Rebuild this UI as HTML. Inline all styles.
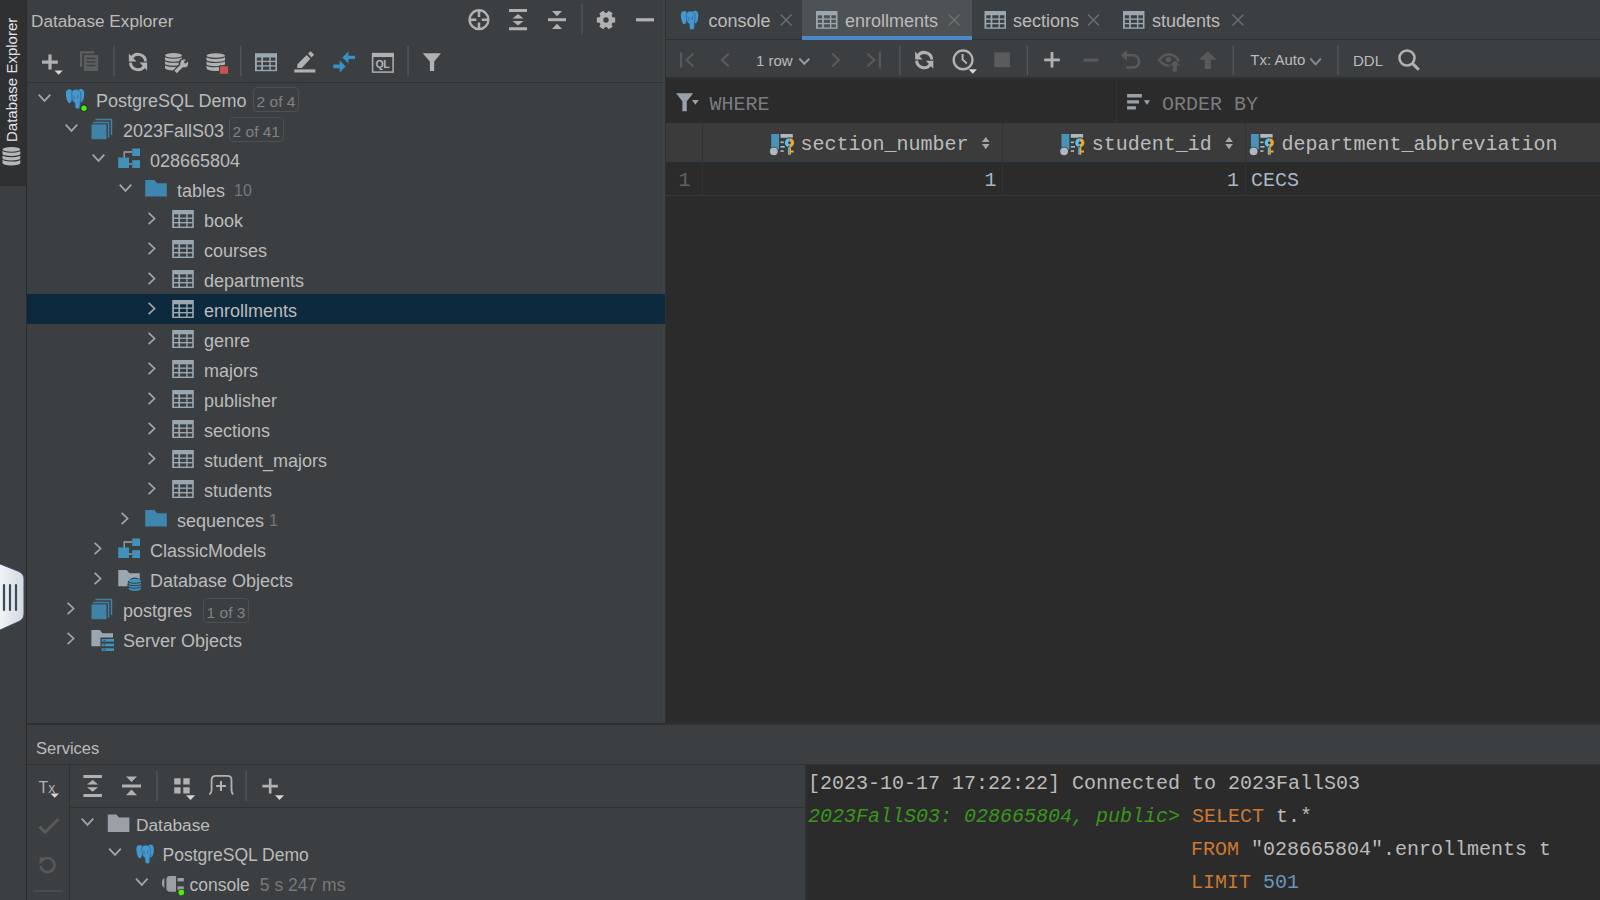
<!DOCTYPE html>
<html><head><meta charset="utf-8">
<style>
*{box-sizing:border-box;margin:0;padding:0}
html,body{width:1600px;height:900px;overflow:hidden;background:#3c3f41;font-family:"Liberation Sans",sans-serif;color:#bbbbbb}
.a{position:absolute}
.t{position:absolute;white-space:pre;font-size:18px;line-height:20px}
.m{position:absolute;white-space:pre;font-family:"Liberation Mono",monospace;font-size:20px;line-height:24px}
svg.ov{position:absolute;left:0;top:0;overflow:visible}
</style></head><body>
<div class="a" style="left:0px;top:0px;width:26px;height:900px;background:#3c3f41;"></div>
<div class="a" style="left:0px;top:0px;width:26px;height:186px;background:#2e3032;"></div>
<div class="a" style="left:26px;top:0px;width:1px;height:900px;background:#2b2b2b;"></div>
<div class="a" style="left:27px;top:0px;width:638px;height:723px;background:#3c3f41;"></div>
<div class="a" style="left:27px;top:82px;width:638px;height:1px;background:#2f3133;"></div>
<div class="a" style="left:663px;top:0px;width:2px;height:723px;background:#404345;"></div>
<div class="a" style="left:665px;top:0px;width:1px;height:723px;background:#2e3032;"></div>
<div class="a" style="left:666px;top:0px;width:934px;height:39px;background:#3c3f41;"></div>
<div class="a" style="left:666px;top:39px;width:934px;height:1px;background:#2f3133;"></div>
<div class="a" style="left:802px;top:0px;width:170px;height:36px;background:#4e5254;"></div>
<div class="a" style="left:802px;top:36px;width:170px;height:4px;background:#4a88c7;"></div>
<div class="a" style="left:666px;top:40px;width:934px;height:38px;background:#3c3f41;"></div>
<div class="a" style="left:666px;top:77px;width:934px;height:2px;background:#2f3133;"></div>
<div class="a" style="left:666px;top:79px;width:934px;height:644px;background:#2b2b2b;"></div>
<div class="a" style="left:1116px;top:79px;width:1px;height:44px;background:#333333;"></div>
<div class="a" style="left:666px;top:123px;width:934px;height:38px;background:#3b3b3b;"></div>
<div class="a" style="left:666px;top:160px;width:934px;height:2px;background:#353c41;"></div>
<div class="a" style="left:702px;top:123px;width:1px;height:72px;background:#323232;"></div>
<div class="a" style="left:1002px;top:123px;width:1px;height:72px;background:#323232;"></div>
<div class="a" style="left:1245px;top:123px;width:1px;height:72px;background:#323232;"></div>
<div class="a" style="left:666px;top:195px;width:934px;height:1px;background:#3a3a3a;"></div>
<div class="a" style="left:27px;top:723px;width:1573px;height:2px;background:#2e3032;"></div>
<div class="a" style="left:27px;top:725px;width:1573px;height:175px;background:#3c3f41;"></div>
<div class="a" style="left:27px;top:764px;width:1573px;height:1px;background:#2f3133;"></div>
<div class="a" style="left:69px;top:765px;width:1px;height:135px;background:#2f3133;"></div>
<div class="a" style="left:70px;top:807px;width:735px;height:1px;background:#2f3133;"></div>
<div class="a" style="left:805px;top:765px;width:2px;height:135px;background:#2e3032;"></div>
<div class="a" style="left:807px;top:765px;width:793px;height:135px;background:#2b2b2b;"></div>
<div class="t" style="left:31px;top:10.8px;font-size:17.2px;color:#bbbbbb;">Database Explorer</div>
<div class="t" style="left:375.6px;top:57.2px;font-size:10.5px;line-height:14px;font-weight:bold;color:#b4b6b8;letter-spacing:-0.4px">QL</div>
<div class="t" style="left:96px;top:91.3px;font-size:18px;color:#bbbbbb;">PostgreSQL Demo</div>
<div class="t" style="left:123px;top:121.3px;font-size:18px;color:#bbbbbb;">2023FallS03</div>
<div class="t" style="left:150px;top:151.3px;font-size:18px;color:#bbbbbb;">028665804</div>
<div class="t" style="left:177px;top:181.3px;font-size:18px;color:#bbbbbb;">tables</div>
<div class="t" style="left:204px;top:211.3px;font-size:18px;color:#bbbbbb;">book</div>
<div class="t" style="left:204px;top:241.3px;font-size:18px;color:#bbbbbb;">courses</div>
<div class="t" style="left:204px;top:271.3px;font-size:18px;color:#bbbbbb;">departments</div>
<div class="a" style="left:27px;top:294px;width:638px;height:30px;background:#0d293e;"></div>
<div class="t" style="left:204px;top:301.3px;font-size:18px;color:#bbbbbb;">enrollments</div>
<div class="t" style="left:204px;top:331.3px;font-size:18px;color:#bbbbbb;">genre</div>
<div class="t" style="left:204px;top:361.3px;font-size:18px;color:#bbbbbb;">majors</div>
<div class="t" style="left:204px;top:391.3px;font-size:18px;color:#bbbbbb;">publisher</div>
<div class="t" style="left:204px;top:421.3px;font-size:18px;color:#bbbbbb;">sections</div>
<div class="t" style="left:204px;top:451.3px;font-size:18px;color:#bbbbbb;">student_majors</div>
<div class="t" style="left:204px;top:481.3px;font-size:18px;color:#bbbbbb;">students</div>
<div class="t" style="left:177px;top:511.3px;font-size:18px;color:#bbbbbb;">sequences</div>
<div class="t" style="left:150px;top:541.3px;font-size:18px;color:#bbbbbb;">ClassicModels</div>
<div class="t" style="left:150px;top:571.3px;font-size:18px;color:#bbbbbb;">Database Objects</div>
<div class="t" style="left:123px;top:601.3px;font-size:18px;color:#bbbbbb;">postgres</div>
<div class="t" style="left:123px;top:631.3px;font-size:18px;color:#bbbbbb;">Server Objects</div>
<div class="a" style="left:253px;top:87px;width:46px;height:25px;border:1.3px solid #4d5052;border-radius:4px"></div>
<div class="t" style="left:256.6px;top:92px;font-size:15.5px;color:#808284;">2 of 4</div>
<div class="a" style="left:229px;top:117px;width:55px;height:25px;border:1.3px solid #4d5052;border-radius:4px"></div>
<div class="t" style="left:232.6px;top:122px;font-size:15.5px;color:#808284;">2 of 41</div>
<div class="a" style="left:203px;top:598px;width:46px;height:25px;border:1.3px solid #4d5052;border-radius:4px"></div>
<div class="t" style="left:206.6px;top:603px;font-size:15.5px;color:#808284;">1 of 3</div>
<div class="t" style="left:234px;top:181px;font-size:16px;color:#75777a;">10</div>
<div class="t" style="left:269px;top:511px;font-size:16px;color:#75777a;">1</div>
<div class="t" style="left:-47.8px;top:70.5px;width:120px;height:22px;font-size:15px;line-height:22px;color:#e4e4e4;transform:rotate(-90deg);text-align:center">Database Explorer</div>
<div class="t" style="left:708.5px;top:10.8px;font-size:18px;color:#bbbbbb;">console</div>
<div class="t" style="left:845px;top:10.8px;font-size:18px;color:#bbbbbb;">enrollments</div>
<div class="t" style="left:1013px;top:10.8px;font-size:18px;color:#bbbbbb;">sections</div>
<div class="t" style="left:1152px;top:10.8px;font-size:18px;color:#bbbbbb;">students</div>
<div class="t" style="left:756px;top:50.5px;font-size:15px;color:#bbbbbb;">1 row</div>
<div class="t" style="left:1250.3px;top:50.3px;font-size:15px;color:#bbbbbb;">Tx: Auto</div>
<div class="t" style="left:1353px;top:50.7px;font-size:15px;color:#bbbbbb;">DDL</div>
<div class="m" style="left:709.4px;top:92.8px;font-size:20px;color:#7a7c7e;">WHERE</div>
<div class="m" style="left:1162px;top:92.8px;font-size:20px;color:#7a7c7e;">ORDER BY</div>
<div class="m" style="left:800.5px;top:132.8px;font-size:20px;color:#bbbbbb;">section_number</div>
<div class="m" style="left:1091.8px;top:132.8px;font-size:20px;color:#bbbbbb;">student_id</div>
<div class="m" style="left:1281.5px;top:132.8px;font-size:20px;color:#bbbbbb;">department_abbreviation</div>
<div class="m" style="left:678.5px;top:168.8px;font-size:20px;color:#606366;">1</div>
<div class="m" style="left:984.5px;top:168.8px;font-size:20px;color:#a9b7c6;">1</div>
<div class="m" style="left:1227px;top:168.8px;font-size:20px;color:#a9b7c6;">1</div>
<div class="m" style="left:1251px;top:168.8px;font-size:20px;color:#a9b7c6;">CECS</div>
<div class="t" style="left:36px;top:737.5px;font-size:16.5px;color:#bbbbbb;">Services</div>
<div class="t" style="left:38.5px;top:778.3px;font-size:16px;color:#afb1b3;">T<span style="font-size:14px">x</span></div>
<div class="t" style="left:136px;top:814.8px;font-size:17.3px;color:#bbbbbb;">Database</div>
<div class="t" style="left:162.5px;top:844.8px;font-size:17.5px;color:#bbbbbb;">PostgreSQL Demo</div>
<div class="t" style="left:189.5px;top:874.8px;font-size:17.5px;color:#bbbbbb;">console</div>
<div class="t" style="left:259.8px;top:874.8px;font-size:17.5px;color:#787a7c;">5 s 247 ms</div>
<div class="m" style="left:808px;top:766.8px;font-size:20px;color:#bbbbbb;;line-height:33px">[2023-10-17 17:22:22] Connected to 2023FallS03</div>
<div class="m" style="left:808px;top:799.8px;font-size:20px;color:#3a961c;;line-height:33px"><i>2023FallS03: 028665804, public&gt;</i> <span style="color:#cc7832">SELECT</span><span style="color:#bbbbbb"> t.*</span></div>
<div class="m" style="left:1191px;top:832.8px;font-size:20px;color:#bbbbbb;;line-height:33px"><span style="color:#cc7832">FROM</span> "028665804".enrollments t</div>
<div class="m" style="left:1191px;top:865.8px;font-size:20px;color:#bbbbbb;;line-height:33px"><span style="color:#cc7832">LIMIT</span> <span style="color:#6897bb">501</span></div>
<svg class="ov" width="1600" height="900" viewBox="0 0 1600 900">
<circle cx="479" cy="19.7" r="9.4" fill="none" stroke="#afb1b3" stroke-width="2.4"/>
<path d="M479 11v6M479 22.4v6M470.3 19.7h6M481.7 19.7h6" stroke="#afb1b3" stroke-width="2.5"/>
<path d="M509 9h18v3h-18zM509 27.3h18v3h-18z" fill="#afb1b3"/>
<path d="M512.5 18.5L518 14L523.5 18.5zM512.5 21L518 25.5L523.5 21z" fill="#afb1b3"/>
<path d="M548 18.2h18v3h-18z" fill="#afb1b3"/>
<path d="M552 11h10L557 16.2zM552 29h10L557 23.8z" fill="#afb1b3"/>
<rect x="581.3" y="4" width="1.3" height="30" fill="#55585a"/>
<path d="M612.43 17.24 L615.18 17.56 L615.18 22.44 L612.43 22.76 L611.61 24.19 L612.70 26.73 L608.48 29.17 L606.82 26.95 L605.18 26.95 L603.52 29.17 L599.30 26.73 L600.39 24.19 L599.57 22.76 L596.82 22.44 L596.82 17.56 L599.57 17.24 L600.39 15.81 L599.30 13.27 L603.52 10.83 L605.18 13.05 L606.82 13.05 L608.48 10.83 L612.70 13.27 L611.61 15.81Z M608.7 20 A2.7 2.7 0 1 0 603.3 20 A2.7 2.7 0 1 0 608.7 20Z" fill="#afb1b3" fill-rule="evenodd"/>
<rect x="636" y="18.2" width="18" height="3.2" fill="#afb1b3"/>
<path d="M48.4 54.5h3.2v15.1h-3.2zM42 60.4h15.8v3.3h-15.8z" fill="#afb1b3"/>
<path d="M54.5 70.6h8.3l-4.15 4.2z" fill="#d6d6d6"/>
<path d="M80 51.2h14.3v2.2h-12.1v13.5h-2.2z" fill="#5c5f61"/>
<rect x="84" y="55.1" width="14.2" height="15.8" fill="#5c5f61"/>
<path d="M86.5 58.5h9M86.5 62h9M86.5 65.5h9" stroke="#3c3f41" stroke-width="1.3"/>
<rect x="113.4" y="46" width="1.3" height="30" fill="#55585a"/>
<path d="M145.60 61.40 A7.6 7.6 0 0 0 131.77 57.64" fill="none" stroke="#afb1b3" stroke-width="3"/>
<path d="M128.90 53.40 V61.40 H136.40Z" fill="#afb1b3"/>
<path d="M130.40 62.60 A7.6 7.6 0 0 0 144.23 66.36" fill="none" stroke="#afb1b3" stroke-width="3"/>
<path d="M147.10 70.60 V62.60 H139.60Z" fill="#afb1b3"/>
<path d="M165 55.6 A8.5 2.6 0 0 1 182 55.6 V67.9 A8.5 2.6 0 0 1 165 67.9Z" fill="#afb1b3"/>
<path d="M164.5 55.6 A9.0 2.6 0 0 0 182.5 55.6" fill="none" stroke="#3c3f41" stroke-width="1.1"/>
<path d="M164.5 59.7 A9.0 2.6 0 0 0 182.5 59.7" fill="none" stroke="#3c3f41" stroke-width="1.1"/>
<path d="M164.5 63.800000000000004 A9.0 2.6 0 0 0 182.5 63.800000000000004" fill="none" stroke="#3c3f41" stroke-width="1.1"/>
<path d="M175 72.6 L183.6 64" stroke="#3c3f41" stroke-width="6" />
<circle cx="184.2" cy="63.4" r="5.6" fill="#3c3f41"/>
<path d="M175.6 72 L182.8 64.8" stroke="#afb1b3" stroke-width="3.4" stroke-linecap="butt"/>
<circle cx="184.2" cy="63.4" r="3.9" fill="#afb1b3"/>
<path d="M184.6 62.9 L188.6 58.9" stroke="#3c3f41" stroke-width="2.6"/>
<path d="M206.5 55.800000000000004 A9.25 2.6 0 0 1 225.0 55.800000000000004 V68.30000000000001 A9.25 2.6 0 0 1 206.5 68.30000000000001Z" fill="#afb1b3"/>
<path d="M206.0 55.800000000000004 A9.75 2.6 0 0 0 225.5 55.800000000000004" fill="none" stroke="#3c3f41" stroke-width="1.1"/>
<path d="M206.0 59.966666666666676 A9.75 2.6 0 0 0 225.5 59.966666666666676" fill="none" stroke="#3c3f41" stroke-width="1.1"/>
<path d="M206.0 64.13333333333334 A9.75 2.6 0 0 0 225.5 64.13333333333334" fill="none" stroke="#3c3f41" stroke-width="1.1"/>
<rect x="219" y="65.3" width="9.9" height="9.5" fill="#3c3f41"/>
<rect x="220" y="66.3" width="8" height="7.5" fill="#c75450"/>
<rect x="240.1" y="46" width="1.3" height="30" fill="#55585a"/>
<rect x="255" y="53.2" width="22" height="18" fill="#9aa7b0"/>
<rect x="256.85" y="57.50" width="4.42" height="3.20" fill="#3c3f41"/>
<rect x="256.85" y="62.10" width="4.42" height="3.10" fill="#3c3f41"/>
<rect x="256.85" y="66.60" width="4.42" height="3.20" fill="#3c3f41"/>
<rect x="263.02" y="57.50" width="6.27" height="3.20" fill="#3c3f41"/>
<rect x="263.02" y="62.10" width="6.27" height="3.10" fill="#3c3f41"/>
<rect x="263.02" y="66.60" width="6.27" height="3.20" fill="#3c3f41"/>
<rect x="270.73" y="57.50" width="4.63" height="3.20" fill="#3c3f41"/>
<rect x="270.73" y="62.10" width="4.63" height="3.10" fill="#3c3f41"/>
<rect x="270.73" y="66.60" width="4.63" height="3.20" fill="#3c3f41"/>
<path d="M297.3 67.9 L297.3 64.4 L306.6 55.1 L310.3 58.7 L301.8 67.9Z" fill="#afb1b3"/>
<path d="M308.1 53.6 L310.6 51.3 L314.1 54.8 L311.4 57.6Z" fill="#afb1b3"/>
<rect x="294.3" y="69.4" width="21.1" height="3.1" fill="#afb1b3"/>
<path d="M342.4 57.4 L348.4 51.4 L348.4 55.8 L355 55.8 L355 59 L348.4 59 L348.4 63.4Z" fill="#3592c4"/>
<path d="M345.6 66.4 L339.7 60.4 L339.7 64.6 L333.2 64.6 L333.2 68.2 L339.7 68.2 L339.7 72.4Z" fill="#3592c4"/>
<rect x="372.6" y="53.6" width="20.5" height="18.5" fill="none" stroke="#afb1b3" stroke-width="1.5"/>
<rect x="372" y="53" width="21.8" height="4" fill="#afb1b3"/>
<rect x="407.4" y="46" width="1.3" height="30" fill="#55585a"/>
<path d="M422.7 53.2 H441 L434.2 61.5 V70.9 H429.9 V61.5Z" fill="#afb1b3"/>
<path d="M38.7 94.7 L44.5 100.9 L50.3 94.7" fill="none" stroke="#a4a6a8" stroke-width="1.7"/>
<g transform="translate(65.5,88.8) scale(1.0)"><path d="M0.3 5 C0.2 1.8 2 0.4 4 0.4 C5.8 0.4 6.8 1.6 6.8 4 L6.5 9.5 C6.3 12 5.4 14.2 4.2 14.4 C2.8 14.6 1.8 12.8 1.2 10.5 C0.7 8.6 0.35 6.8 0.3 5Z" fill="#4597cf"/><path d="M12.8 1.6 C13.6 0.2 15.6 -0.2 17 0.6 C18.6 1.5 18.9 3.8 18.7 6.2 C18.5 8.8 18 11 17 12.8 C16.2 13.9 15.3 13.6 14.6 12.5Z" fill="#4597cf"/><path d="M6.2 3.8 C6.6 1.4 8.6 0.8 10.6 0.8 C13 0.8 14.8 2 15.2 4.4 C15.5 6.6 15.2 9.4 14.8 12 C14.6 14 14.6 16.5 14.4 18.3 C14.2 19.6 13.2 20 12 20 C10.6 20 9.8 19.4 9.7 18 L9.5 14.8 C9.3 13.2 8.2 13.2 7.4 12.4 C6.6 11.4 6.4 9 6.3 7Z" fill="#4597cf" stroke="#2f5d80" stroke-width="0.7"/><path d="M7.8 6.5 C8.6 7.5 8.8 9 8.6 10.5 M12.8 5.8 C12.2 6.8 12 8.5 12.6 10 M5.5 13.2 C6.5 12.6 7.3 12.8 8 13.5 M16 11.8 C16.8 12.2 17.8 12 18.4 11.4" fill="none" stroke="#2f5d80" stroke-width="0.7"/></g>
<circle cx="84" cy="108.2" r="3.6" fill="#2b2b2b"/><circle cx="84" cy="108.2" r="2.7" fill="#48ee0c"/>
<path d="M65.7 124.7 L71.5 130.9 L77.3 124.7" fill="none" stroke="#a4a6a8" stroke-width="1.7"/>
<path d="M95.5 118.80000000000001 H112.2 V135.0 H110.8 V120.2 H95.5Z" fill="#4182a8"/>
<path d="M93.1 121.80000000000001 H109.3 V137.5 H107.9 V123.2 H93.1Z" fill="#4182a8"/>
<rect x="91.5" y="124.4" width="15" height="14.8" fill="#4182a8"/>
<path d="M92.7 154.7 L98.5 160.9 L104.3 154.7" fill="none" stroke="#a4a6a8" stroke-width="1.7"/>
<path d="M124.2 158.0 V152.0 H132.2" fill="none" stroke="#a0a4a8" stroke-width="1.3"/>
<rect x="118.2" y="157.5" width="10.8" height="10.5" fill="#4191bb"/>
<rect x="132.2" y="148.5" width="7.8" height="7.5" fill="#4191bb"/>
<rect x="132.2" y="160.2" width="7.8" height="7.8" fill="#4191bb"/>
<path d="M129.0 164.0 H132.2" stroke="#a0a4a8" stroke-width="1.3"/>
<path d="M119.7 184.7 L125.5 190.9 L131.3 184.7" fill="none" stroke="#a4a6a8" stroke-width="1.7"/>
<path d="M145.2 180 H154.2 L157.2 183.2 H166.79999999999998 V196.5 H145.2Z" fill="#3f86ae"/>
<path d="M148.6 212.8 L154.6 218.5 L148.6 224.2" fill="none" stroke="#a4a6a8" stroke-width="1.7"/>
<rect x="172.2" y="210" width="21.6" height="18" fill="#9aa7b0"/>
<rect x="174.02" y="214.30" width="4.34" height="3.20" fill="#3c3f41"/>
<rect x="174.02" y="218.90" width="4.34" height="3.10" fill="#3c3f41"/>
<rect x="174.02" y="223.40" width="4.34" height="3.20" fill="#3c3f41"/>
<rect x="180.07" y="214.30" width="6.16" height="3.20" fill="#3c3f41"/>
<rect x="180.07" y="218.90" width="6.16" height="3.10" fill="#3c3f41"/>
<rect x="180.07" y="223.40" width="6.16" height="3.20" fill="#3c3f41"/>
<rect x="187.64" y="214.30" width="4.54" height="3.20" fill="#3c3f41"/>
<rect x="187.64" y="218.90" width="4.54" height="3.10" fill="#3c3f41"/>
<rect x="187.64" y="223.40" width="4.54" height="3.20" fill="#3c3f41"/>
<path d="M148.6 242.8 L154.6 248.5 L148.6 254.2" fill="none" stroke="#a4a6a8" stroke-width="1.7"/>
<rect x="172.2" y="240" width="21.6" height="18" fill="#9aa7b0"/>
<rect x="174.02" y="244.30" width="4.34" height="3.20" fill="#3c3f41"/>
<rect x="174.02" y="248.90" width="4.34" height="3.10" fill="#3c3f41"/>
<rect x="174.02" y="253.40" width="4.34" height="3.20" fill="#3c3f41"/>
<rect x="180.07" y="244.30" width="6.16" height="3.20" fill="#3c3f41"/>
<rect x="180.07" y="248.90" width="6.16" height="3.10" fill="#3c3f41"/>
<rect x="180.07" y="253.40" width="6.16" height="3.20" fill="#3c3f41"/>
<rect x="187.64" y="244.30" width="4.54" height="3.20" fill="#3c3f41"/>
<rect x="187.64" y="248.90" width="4.54" height="3.10" fill="#3c3f41"/>
<rect x="187.64" y="253.40" width="4.54" height="3.20" fill="#3c3f41"/>
<path d="M148.6 272.8 L154.6 278.5 L148.6 284.2" fill="none" stroke="#a4a6a8" stroke-width="1.7"/>
<rect x="172.2" y="270" width="21.6" height="18" fill="#9aa7b0"/>
<rect x="174.02" y="274.30" width="4.34" height="3.20" fill="#3c3f41"/>
<rect x="174.02" y="278.90" width="4.34" height="3.10" fill="#3c3f41"/>
<rect x="174.02" y="283.40" width="4.34" height="3.20" fill="#3c3f41"/>
<rect x="180.07" y="274.30" width="6.16" height="3.20" fill="#3c3f41"/>
<rect x="180.07" y="278.90" width="6.16" height="3.10" fill="#3c3f41"/>
<rect x="180.07" y="283.40" width="6.16" height="3.20" fill="#3c3f41"/>
<rect x="187.64" y="274.30" width="4.54" height="3.20" fill="#3c3f41"/>
<rect x="187.64" y="278.90" width="4.54" height="3.10" fill="#3c3f41"/>
<rect x="187.64" y="283.40" width="4.54" height="3.20" fill="#3c3f41"/>
<path d="M148.6 302.8 L154.6 308.5 L148.6 314.2" fill="none" stroke="#a4a6a8" stroke-width="1.7"/>
<rect x="172.2" y="300" width="21.6" height="18" fill="#9aa7b0"/>
<rect x="174.02" y="304.30" width="4.34" height="3.20" fill="#0d293e"/>
<rect x="174.02" y="308.90" width="4.34" height="3.10" fill="#0d293e"/>
<rect x="174.02" y="313.40" width="4.34" height="3.20" fill="#0d293e"/>
<rect x="180.07" y="304.30" width="6.16" height="3.20" fill="#0d293e"/>
<rect x="180.07" y="308.90" width="6.16" height="3.10" fill="#0d293e"/>
<rect x="180.07" y="313.40" width="6.16" height="3.20" fill="#0d293e"/>
<rect x="187.64" y="304.30" width="4.54" height="3.20" fill="#0d293e"/>
<rect x="187.64" y="308.90" width="4.54" height="3.10" fill="#0d293e"/>
<rect x="187.64" y="313.40" width="4.54" height="3.20" fill="#0d293e"/>
<path d="M148.6 332.8 L154.6 338.5 L148.6 344.2" fill="none" stroke="#a4a6a8" stroke-width="1.7"/>
<rect x="172.2" y="330" width="21.6" height="18" fill="#9aa7b0"/>
<rect x="174.02" y="334.30" width="4.34" height="3.20" fill="#3c3f41"/>
<rect x="174.02" y="338.90" width="4.34" height="3.10" fill="#3c3f41"/>
<rect x="174.02" y="343.40" width="4.34" height="3.20" fill="#3c3f41"/>
<rect x="180.07" y="334.30" width="6.16" height="3.20" fill="#3c3f41"/>
<rect x="180.07" y="338.90" width="6.16" height="3.10" fill="#3c3f41"/>
<rect x="180.07" y="343.40" width="6.16" height="3.20" fill="#3c3f41"/>
<rect x="187.64" y="334.30" width="4.54" height="3.20" fill="#3c3f41"/>
<rect x="187.64" y="338.90" width="4.54" height="3.10" fill="#3c3f41"/>
<rect x="187.64" y="343.40" width="4.54" height="3.20" fill="#3c3f41"/>
<path d="M148.6 362.8 L154.6 368.5 L148.6 374.2" fill="none" stroke="#a4a6a8" stroke-width="1.7"/>
<rect x="172.2" y="360" width="21.6" height="18" fill="#9aa7b0"/>
<rect x="174.02" y="364.30" width="4.34" height="3.20" fill="#3c3f41"/>
<rect x="174.02" y="368.90" width="4.34" height="3.10" fill="#3c3f41"/>
<rect x="174.02" y="373.40" width="4.34" height="3.20" fill="#3c3f41"/>
<rect x="180.07" y="364.30" width="6.16" height="3.20" fill="#3c3f41"/>
<rect x="180.07" y="368.90" width="6.16" height="3.10" fill="#3c3f41"/>
<rect x="180.07" y="373.40" width="6.16" height="3.20" fill="#3c3f41"/>
<rect x="187.64" y="364.30" width="4.54" height="3.20" fill="#3c3f41"/>
<rect x="187.64" y="368.90" width="4.54" height="3.10" fill="#3c3f41"/>
<rect x="187.64" y="373.40" width="4.54" height="3.20" fill="#3c3f41"/>
<path d="M148.6 392.8 L154.6 398.5 L148.6 404.2" fill="none" stroke="#a4a6a8" stroke-width="1.7"/>
<rect x="172.2" y="390" width="21.6" height="18" fill="#9aa7b0"/>
<rect x="174.02" y="394.30" width="4.34" height="3.20" fill="#3c3f41"/>
<rect x="174.02" y="398.90" width="4.34" height="3.10" fill="#3c3f41"/>
<rect x="174.02" y="403.40" width="4.34" height="3.20" fill="#3c3f41"/>
<rect x="180.07" y="394.30" width="6.16" height="3.20" fill="#3c3f41"/>
<rect x="180.07" y="398.90" width="6.16" height="3.10" fill="#3c3f41"/>
<rect x="180.07" y="403.40" width="6.16" height="3.20" fill="#3c3f41"/>
<rect x="187.64" y="394.30" width="4.54" height="3.20" fill="#3c3f41"/>
<rect x="187.64" y="398.90" width="4.54" height="3.10" fill="#3c3f41"/>
<rect x="187.64" y="403.40" width="4.54" height="3.20" fill="#3c3f41"/>
<path d="M148.6 422.8 L154.6 428.5 L148.6 434.2" fill="none" stroke="#a4a6a8" stroke-width="1.7"/>
<rect x="172.2" y="420" width="21.6" height="18" fill="#9aa7b0"/>
<rect x="174.02" y="424.30" width="4.34" height="3.20" fill="#3c3f41"/>
<rect x="174.02" y="428.90" width="4.34" height="3.10" fill="#3c3f41"/>
<rect x="174.02" y="433.40" width="4.34" height="3.20" fill="#3c3f41"/>
<rect x="180.07" y="424.30" width="6.16" height="3.20" fill="#3c3f41"/>
<rect x="180.07" y="428.90" width="6.16" height="3.10" fill="#3c3f41"/>
<rect x="180.07" y="433.40" width="6.16" height="3.20" fill="#3c3f41"/>
<rect x="187.64" y="424.30" width="4.54" height="3.20" fill="#3c3f41"/>
<rect x="187.64" y="428.90" width="4.54" height="3.10" fill="#3c3f41"/>
<rect x="187.64" y="433.40" width="4.54" height="3.20" fill="#3c3f41"/>
<path d="M148.6 452.8 L154.6 458.5 L148.6 464.2" fill="none" stroke="#a4a6a8" stroke-width="1.7"/>
<rect x="172.2" y="450" width="21.6" height="18" fill="#9aa7b0"/>
<rect x="174.02" y="454.30" width="4.34" height="3.20" fill="#3c3f41"/>
<rect x="174.02" y="458.90" width="4.34" height="3.10" fill="#3c3f41"/>
<rect x="174.02" y="463.40" width="4.34" height="3.20" fill="#3c3f41"/>
<rect x="180.07" y="454.30" width="6.16" height="3.20" fill="#3c3f41"/>
<rect x="180.07" y="458.90" width="6.16" height="3.10" fill="#3c3f41"/>
<rect x="180.07" y="463.40" width="6.16" height="3.20" fill="#3c3f41"/>
<rect x="187.64" y="454.30" width="4.54" height="3.20" fill="#3c3f41"/>
<rect x="187.64" y="458.90" width="4.54" height="3.10" fill="#3c3f41"/>
<rect x="187.64" y="463.40" width="4.54" height="3.20" fill="#3c3f41"/>
<path d="M148.6 482.8 L154.6 488.5 L148.6 494.2" fill="none" stroke="#a4a6a8" stroke-width="1.7"/>
<rect x="172.2" y="480" width="21.6" height="18" fill="#9aa7b0"/>
<rect x="174.02" y="484.30" width="4.34" height="3.20" fill="#3c3f41"/>
<rect x="174.02" y="488.90" width="4.34" height="3.10" fill="#3c3f41"/>
<rect x="174.02" y="493.40" width="4.34" height="3.20" fill="#3c3f41"/>
<rect x="180.07" y="484.30" width="6.16" height="3.20" fill="#3c3f41"/>
<rect x="180.07" y="488.90" width="6.16" height="3.10" fill="#3c3f41"/>
<rect x="180.07" y="493.40" width="6.16" height="3.20" fill="#3c3f41"/>
<rect x="187.64" y="484.30" width="4.54" height="3.20" fill="#3c3f41"/>
<rect x="187.64" y="488.90" width="4.54" height="3.10" fill="#3c3f41"/>
<rect x="187.64" y="493.40" width="4.54" height="3.20" fill="#3c3f41"/>
<path d="M121.6 512.8 L127.6 518.5 L121.6 524.2" fill="none" stroke="#a4a6a8" stroke-width="1.7"/>
<path d="M145.2 510 H154.2 L157.2 513.2 H166.79999999999998 V526.5 H145.2Z" fill="#3f86ae"/>
<path d="M94.6 542.8 L100.6 548.5 L94.6 554.2" fill="none" stroke="#a4a6a8" stroke-width="1.7"/>
<path d="M124.2 548.0 V542.0 H132.2" fill="none" stroke="#a0a4a8" stroke-width="1.3"/>
<rect x="118.2" y="547.5" width="10.8" height="10.5" fill="#4191bb"/>
<rect x="132.2" y="538.5" width="7.8" height="7.5" fill="#4191bb"/>
<rect x="132.2" y="550.2" width="7.8" height="7.8" fill="#4191bb"/>
<path d="M129.0 554.0 H132.2" stroke="#a0a4a8" stroke-width="1.3"/>
<path d="M94.6 572.8 L100.6 578.5 L94.6 584.2" fill="none" stroke="#a4a6a8" stroke-width="1.7"/>
<path d="M118.3 570 H126.8 L129.3 573.2 H139.7 V586.3 H118.3Z" fill="#9aa7b0"/>
<ellipse cx="134.8" cy="585" rx="7.5" ry="7.5" fill="#3c3f41"/>
<path d="M128.7 581.0 A6.2 2.2 0 0 1 141.1 581.0 V588.5999999999999 A6.2 2.2 0 0 1 128.7 588.5999999999999Z" fill="#3d95c4"/>
<path d="M128.2 581.0 A6.7 2.2 0 0 0 141.6 581.0" fill="none" stroke="#3c3f41" stroke-width="1.1"/>
<path d="M128.2 583.5333333333333 A6.7 2.2 0 0 0 141.6 583.5333333333333" fill="none" stroke="#3c3f41" stroke-width="1.1"/>
<path d="M128.2 586.0666666666666 A6.7 2.2 0 0 0 141.6 586.0666666666666" fill="none" stroke="#3c3f41" stroke-width="1.1"/>
<path d="M67.6 602.8 L73.6 608.5 L67.6 614.2" fill="none" stroke="#a4a6a8" stroke-width="1.7"/>
<path d="M95.5 598.8 H112.2 V615.0 H110.8 V600.1999999999999 H95.5Z" fill="#4182a8"/>
<path d="M93.1 601.8 H109.3 V617.5 H107.9 V603.1999999999999 H93.1Z" fill="#4182a8"/>
<rect x="91.5" y="604.4" width="15" height="14.8" fill="#4182a8"/>
<path d="M67.6 632.8 L73.6 638.5 L67.6 644.2" fill="none" stroke="#a4a6a8" stroke-width="1.7"/>
<path d="M91.4 630 H99.9 L102.4 633.2 H113.0 V646.3 H91.4Z" fill="#9aa7b0"/>
<rect x="100.4" y="637.5" width="14" height="14" fill="#3c3f41"/>
<rect x="101.7" y="639.0" width="12.3" height="2.6" fill="#3d95c4"/>
<rect x="103.4" y="639.8" width="2" height="1" fill="#3c3f41"/>
<rect x="101.7" y="643.65" width="12.3" height="2.6" fill="#3d95c4"/>
<rect x="103.4" y="644.4499999999999" width="2" height="1" fill="#3c3f41"/>
<rect x="101.7" y="648.3" width="12.3" height="2.6" fill="#3d95c4"/>
<rect x="103.4" y="649.0999999999999" width="2" height="1" fill="#3c3f41"/>
<path d="M2.5 149.6 A8.9 2.6 0 0 1 20.3 149.6 V162.9 A8.9 2.6 0 0 1 2.5 162.9Z" fill="#b5b7b9"/>
<path d="M2.0 149.6 A9.4 2.6 0 0 0 20.8 149.6" fill="none" stroke="#2e3032" stroke-width="1.1"/>
<path d="M2.0 154.03333333333333 A9.4 2.6 0 0 0 20.8 154.03333333333333" fill="none" stroke="#2e3032" stroke-width="1.1"/>
<path d="M2.0 158.46666666666667 A9.4 2.6 0 0 0 20.8 158.46666666666667" fill="none" stroke="#2e3032" stroke-width="1.1"/>
<defs><linearGradient id="hg" x1="0" x2="1"><stop offset="0" stop-color="#f2f4f6"/><stop offset="1" stop-color="#d3d9df"/></linearGradient></defs>
<path d="M-1 563.5 L19 571.5 Q24 574 24 579 V614 Q24 619 19 621.5 L-1 630.5Z" fill="url(#hg)" stroke="#37506a" stroke-width="1"/>
<path d="M4 585v25M10 585v25M16 585v25" stroke="#3a4b5e" stroke-width="2.2" stroke-linecap="round"/>
<g transform="translate(680.5,10.6) scale(0.95)"><path d="M0.3 5 C0.2 1.8 2 0.4 4 0.4 C5.8 0.4 6.8 1.6 6.8 4 L6.5 9.5 C6.3 12 5.4 14.2 4.2 14.4 C2.8 14.6 1.8 12.8 1.2 10.5 C0.7 8.6 0.35 6.8 0.3 5Z" fill="#4597cf"/><path d="M12.8 1.6 C13.6 0.2 15.6 -0.2 17 0.6 C18.6 1.5 18.9 3.8 18.7 6.2 C18.5 8.8 18 11 17 12.8 C16.2 13.9 15.3 13.6 14.6 12.5Z" fill="#4597cf"/><path d="M6.2 3.8 C6.6 1.4 8.6 0.8 10.6 0.8 C13 0.8 14.8 2 15.2 4.4 C15.5 6.6 15.2 9.4 14.8 12 C14.6 14 14.6 16.5 14.4 18.3 C14.2 19.6 13.2 20 12 20 C10.6 20 9.8 19.4 9.7 18 L9.5 14.8 C9.3 13.2 8.2 13.2 7.4 12.4 C6.6 11.4 6.4 9 6.3 7Z" fill="#4597cf" stroke="#2f5d80" stroke-width="0.7"/><path d="M7.8 6.5 C8.6 7.5 8.8 9 8.6 10.5 M12.8 5.8 C12.2 6.8 12 8.5 12.6 10 M5.5 13.2 C6.5 12.6 7.3 12.8 8 13.5 M16 11.8 C16.8 12.2 17.8 12 18.4 11.4" fill="none" stroke="#2f5d80" stroke-width="0.7"/></g>
<path d="M780.6 14.4 L791.6 25.4 M791.6 14.4 L780.6 25.4" stroke="#6e7072" stroke-width="1.4"/>
<rect x="816" y="11" width="21.5" height="17.8" fill="#9aa7b0"/>
<rect x="817.81" y="15.25" width="4.32" height="3.16" fill="#4e5254"/>
<rect x="817.81" y="19.80" width="4.32" height="3.07" fill="#4e5254"/>
<rect x="817.81" y="24.25" width="4.32" height="3.16" fill="#4e5254"/>
<rect x="823.84" y="15.25" width="6.13" height="3.16" fill="#4e5254"/>
<rect x="823.84" y="19.80" width="6.13" height="3.07" fill="#4e5254"/>
<rect x="823.84" y="24.25" width="6.13" height="3.16" fill="#4e5254"/>
<rect x="831.37" y="15.25" width="4.52" height="3.16" fill="#4e5254"/>
<rect x="831.37" y="19.80" width="4.52" height="3.07" fill="#4e5254"/>
<rect x="831.37" y="24.25" width="4.52" height="3.16" fill="#4e5254"/>
<path d="M948.7 14.5 L959.7 25.5 M959.7 14.5 L948.7 25.5" stroke="#6e7072" stroke-width="1.4"/>
<rect x="984.5" y="11" width="21.5" height="17.8" fill="#9aa7b0"/>
<rect x="986.31" y="15.25" width="4.32" height="3.16" fill="#3c3f41"/>
<rect x="986.31" y="19.80" width="4.32" height="3.07" fill="#3c3f41"/>
<rect x="986.31" y="24.25" width="4.32" height="3.16" fill="#3c3f41"/>
<rect x="992.34" y="15.25" width="6.13" height="3.16" fill="#3c3f41"/>
<rect x="992.34" y="19.80" width="6.13" height="3.07" fill="#3c3f41"/>
<rect x="992.34" y="24.25" width="6.13" height="3.16" fill="#3c3f41"/>
<rect x="999.87" y="15.25" width="4.52" height="3.16" fill="#3c3f41"/>
<rect x="999.87" y="19.80" width="4.52" height="3.07" fill="#3c3f41"/>
<rect x="999.87" y="24.25" width="4.52" height="3.16" fill="#3c3f41"/>
<path d="M1088 14.5 L1099 25.5 M1099 14.5 L1088 25.5" stroke="#6e7072" stroke-width="1.4"/>
<rect x="1123" y="11" width="21.5" height="17.8" fill="#9aa7b0"/>
<rect x="1124.81" y="15.25" width="4.32" height="3.16" fill="#3c3f41"/>
<rect x="1124.81" y="19.80" width="4.32" height="3.07" fill="#3c3f41"/>
<rect x="1124.81" y="24.25" width="4.32" height="3.16" fill="#3c3f41"/>
<rect x="1130.84" y="15.25" width="6.13" height="3.16" fill="#3c3f41"/>
<rect x="1130.84" y="19.80" width="6.13" height="3.07" fill="#3c3f41"/>
<rect x="1130.84" y="24.25" width="6.13" height="3.16" fill="#3c3f41"/>
<rect x="1138.37" y="15.25" width="4.52" height="3.16" fill="#3c3f41"/>
<rect x="1138.37" y="19.80" width="4.52" height="3.07" fill="#3c3f41"/>
<rect x="1138.37" y="24.25" width="4.52" height="3.16" fill="#3c3f41"/>
<path d="M1232.5 14.5 L1243.5 25.5 M1243.5 14.5 L1232.5 25.5" stroke="#6e7072" stroke-width="1.4"/>
<rect x="680" y="52.4" width="2.2" height="15.1" fill="#58595b"/>
<path d="M693.3 53.6 L686.5 60 L693.3 66.4" fill="none" stroke="#58595b" stroke-width="2.2"/>
<path d="M728.7 53.6 L722 60 L728.7 66.4" fill="none" stroke="#58595b" stroke-width="2.2"/>
<path d="M799.3 58.6 L804.3 63.8 L809.3 58.6" fill="none" stroke="#9a9c9e" stroke-width="2"/>
<path d="M832.3 53.6 L839 60 L832.3 66.4" fill="none" stroke="#58595b" stroke-width="2.2"/>
<path d="M867.5 53.6 L874.3 60 L867.5 66.4" fill="none" stroke="#58595b" stroke-width="2.2"/>
<rect x="878.8" y="52.4" width="2.2" height="15.1" fill="#58595b"/>
<rect x="899.2" y="45.2" width="1.3" height="30" fill="#55585a"/>
<path d="M931.80 59.50 A7.6 7.6 0 0 0 917.97 55.74" fill="none" stroke="#afb1b3" stroke-width="3"/>
<path d="M915.10 51.50 V59.50 H922.60Z" fill="#afb1b3"/>
<path d="M916.60 60.70 A7.6 7.6 0 0 0 930.43 64.46" fill="none" stroke="#afb1b3" stroke-width="3"/>
<path d="M933.30 68.70 V60.70 H925.80Z" fill="#afb1b3"/>
<circle cx="963.1" cy="59.9" r="9.4" fill="none" stroke="#afb1b3" stroke-width="2.4"/>
<path d="M962.6 54 V59.6 L966.8 63.4" fill="none" stroke="#afb1b3" stroke-width="2"/>
<path d="M968.6 69.2 h8.3 l-4.15 4.5z" fill="#d6d6d6"/>
<rect x="994.3" y="52.4" width="15.6" height="14.8" fill="#5a5b5c"/>
<rect x="1026.7" y="45.2" width="1.3" height="30" fill="#55585a"/>
<path d="M1050.6 52.1h2.8v15.4h-2.8zM1044.2 58.4h15.6v2.8h-15.6z" fill="#afb1b3"/>
<rect x="1083.4" y="58.6" width="15.2" height="3.1" fill="#58595b"/>
<path d="M1126 55.2 H1132.9 A6.2 6.2 0 0 1 1132.9 67.6 H1126.3" fill="none" stroke="#58595b" stroke-width="2.5"/>
<path d="M1120.8 55.3 L1127 49.8 V60.8Z" fill="#58595b"/>
<path d="M1159 60 Q1168.8 48.5 1178.6 60 Q1168.8 71.5 1159 60Z" fill="none" stroke="#58595b" stroke-width="2.4"/>
<circle cx="1168.4" cy="59.6" r="2.7" fill="#58595b"/>
<path d="M1172.7 71.8 V65.6 H1170 L1174.8 60.5 L1180.6 65.6 H1176.9 V71.8Z" fill="#58595b" stroke="#3c3f41" stroke-width="1.6" paint-order="stroke"/>
<path d="M1207.8 51.2 L1216.7 59.8 H1210.9 V69 H1204.7 V59.8 H1199Z" fill="#58595b"/>
<rect x="1232.5" y="45.2" width="1.3" height="30" fill="#55585a"/>
<path d="M1310.3 58.5 L1315.6 64.3 L1320.9 58.5" fill="none" stroke="#7d898f" stroke-width="2"/>
<rect x="1337.3" y="45.2" width="1.3" height="29.5" fill="#55585a"/>
<circle cx="1407" cy="58" r="7.5" fill="none" stroke="#afb1b3" stroke-width="2.6"/>
<path d="M1412.4 63.4 L1418.8 69.8" stroke="#afb1b3" stroke-width="3"/>
<path d="M676 93.3 H693.2 L686.8 101.3 V111.2 H682.4 V101.3Z" fill="#97a1a9"/>
<path d="M692 100 h6.7 l-3.35 4.7z" fill="#9aa3aa"/>
<path d="M1127.1 94.1h14.8v3.4h-14.8zM1127.1 100.2h11.9v3.4h-11.9zM1127.1 106.2h8.8v3.4h-8.8z" fill="#97a1a9"/>
<path d="M1143.9 100.2 h6.1 l-3.05 4.8z" fill="#97a1a9"/>
<rect x="771.2" y="134" width="7.8" height="15.5" fill="#4a93b8"/>
<circle cx="773.8000000000001" cy="151.3" r="4.6" fill="#3b3b3b"/><circle cx="773.8000000000001" cy="151.3" r="3.9" fill="#aeb9c0"/>
<rect x="780.5" y="134" width="12.3" height="3.8" fill="#aeb9c0"/>
<rect x="780.5" y="141.5" width="3.2" height="1.6" fill="#aeb9c0"/>
<rect x="780.5" y="146" width="4.2" height="1.6" fill="#aeb9c0"/>
<rect x="780.5" y="150.3" width="3.2" height="1.6" fill="#aeb9c0"/>
<circle cx="789.5" cy="142.8" r="5.5" fill="#3b3b3b"/>
<path d="M789.5 138.2 A4.6 4.6 0 0 0 789.5 147.4Z M788.0 146 H789.5 V154.8 H788.0Z" fill="#4fc3f7"/>
<path d="M789.5 138.2 A4.6 4.6 0 0 1 789.5 147.4Z M789.5 146 H791.0 V154.8 H789.5Z M791.0 150.5 H793.7 V152.5 H791.0Z" fill="#f0a732"/>
<circle cx="789.5" cy="142.8" r="1.4" fill="#3b3b3b"/>
<path d="M982 142 L985.8 137 L989.6 142Z M982 144 L985.8 149.2 L989.6 144Z" fill="#a5a7a9"/>
<rect x="1061.5" y="134" width="7.8" height="15.5" fill="#4a93b8"/>
<circle cx="1064.1" cy="151.3" r="4.6" fill="#3b3b3b"/><circle cx="1064.1" cy="151.3" r="3.9" fill="#aeb9c0"/>
<rect x="1070.8" y="134" width="12.3" height="3.8" fill="#aeb9c0"/>
<rect x="1070.8" y="141.5" width="3.2" height="1.6" fill="#aeb9c0"/>
<rect x="1070.8" y="146" width="4.2" height="1.6" fill="#aeb9c0"/>
<rect x="1070.8" y="150.3" width="3.2" height="1.6" fill="#aeb9c0"/>
<circle cx="1079.8" cy="142.8" r="5.5" fill="#3b3b3b"/>
<path d="M1079.8 138.2 A4.6 4.6 0 0 0 1079.8 147.4Z M1078.3 146 H1079.8 V154.8 H1078.3Z" fill="#4fc3f7"/>
<path d="M1079.8 138.2 A4.6 4.6 0 0 1 1079.8 147.4Z M1079.8 146 H1081.3 V154.8 H1079.8Z M1081.3 150.5 H1084.0 V152.5 H1081.3Z" fill="#f0a732"/>
<circle cx="1079.8" cy="142.8" r="1.4" fill="#3b3b3b"/>
<path d="M1225.3 142 L1229.1 137 L1232.8999999999999 142Z M1225.3 144 L1229.1 149.2 L1232.8999999999999 144Z" fill="#a5a7a9"/>
<rect x="1251" y="134" width="7.8" height="15.5" fill="#4a93b8"/>
<circle cx="1253.6" cy="151.3" r="4.6" fill="#3b3b3b"/><circle cx="1253.6" cy="151.3" r="3.9" fill="#aeb9c0"/>
<rect x="1260.3" y="134" width="12.3" height="3.8" fill="#aeb9c0"/>
<rect x="1260.3" y="141.5" width="3.2" height="1.6" fill="#aeb9c0"/>
<rect x="1260.3" y="146" width="4.2" height="1.6" fill="#aeb9c0"/>
<rect x="1260.3" y="150.3" width="3.2" height="1.6" fill="#aeb9c0"/>
<circle cx="1269.3" cy="142.8" r="5.5" fill="#3b3b3b"/>
<path d="M1269.3 138.2 A4.6 4.6 0 0 0 1269.3 147.4Z M1267.8 146 H1269.3 V154.8 H1267.8Z" fill="#4fc3f7"/>
<path d="M1269.3 138.2 A4.6 4.6 0 0 1 1269.3 147.4Z M1269.3 146 H1270.8 V154.8 H1269.3Z M1270.8 150.5 H1273.5 V152.5 H1270.8Z" fill="#f0a732"/>
<circle cx="1269.3" cy="142.8" r="1.4" fill="#3b3b3b"/>
<path d="M50.5 793.5 h8.5 l-4.25 4.2z" fill="#d6d6d6"/>
<path d="M39.5 826.5 L45 832.3 L58.5 819" fill="none" stroke="#58595b" stroke-width="3"/>
<path d="M45 858.5 A7 7 0 1 1 40.5 866" fill="none" stroke="#58595b" stroke-width="2.6"/>
<path d="M39.5 857.5 L47.5 857.5 L39.5 864.5Z" fill="#58595b"/>
<rect x="33" y="890.3" width="30" height="1.5" fill="#505356"/>
<path d="M83.4 775h18.5v3h-18.5zM83.4 794h18.5v3h-18.5z" fill="#afb1b3"/>
<path d="M87 784.6L92.6 780L98.2 784.6zM87 787.2L92.6 791.8L98.2 787.2z" fill="#afb1b3"/>
<path d="M122 784.5h19v3h-19z" fill="#afb1b3"/>
<path d="M126 776.4h11L131.5 782zM126 795.3h11L131.5 789.6z" fill="#afb1b3"/>
<rect x="156.3" y="771" width="1.3" height="30" fill="#55585a"/>
<path d="M174.2 778.2h6.4v6.4h-6.4zM183.3 778.2h6.4v6.4h-6.4zM174.2 787.2h6.4v6.4h-6.4zM183.3 787.2h6.4v6.4h-6.4z" fill="#afb1b3"/>
<path d="M186 795.2h9.1l-4.55 4.9z" fill="#d6d6d6"/>
<path d="M209.4 794.4 Q211.6 793 211.6 790 V780 Q211.6 775.8 215.8 775.8 H227.3 Q231.5 775.8 231.5 780 V790 Q231.5 793 233.2 794.4" fill="none" stroke="#afb1b3" stroke-width="1.8"/>
<path d="M220 780.9h2v10h-2zM216.1 784.9h9.8v2h-9.8z" fill="#afb1b3"/>
<rect x="245.4" y="771" width="1.3" height="30" fill="#55585a"/>
<path d="M268.9 778.6h2.6v15h-2.6zM262.4 784.8h15.5v2.6h-15.5z" fill="#afb1b3"/>
<path d="M275 795.2h9l-4.5 4.9z" fill="#d6d6d6"/>
<path d="M81.7 818.7 L87.5 824.9 L93.3 818.7" fill="none" stroke="#a4a6a8" stroke-width="1.7"/>
<path d="M107.8 814.4 H116.5 L119 817.4 H129.4 V832 H107.8Z" fill="#9aa0a6"/>
<path d="M109.2 848.7 L115.0 854.9 L120.8 848.7" fill="none" stroke="#a4a6a8" stroke-width="1.7"/>
<g transform="translate(136,844.5) scale(0.95)"><path d="M0.3 5 C0.2 1.8 2 0.4 4 0.4 C5.8 0.4 6.8 1.6 6.8 4 L6.5 9.5 C6.3 12 5.4 14.2 4.2 14.4 C2.8 14.6 1.8 12.8 1.2 10.5 C0.7 8.6 0.35 6.8 0.3 5Z" fill="#4597cf"/><path d="M12.8 1.6 C13.6 0.2 15.6 -0.2 17 0.6 C18.6 1.5 18.9 3.8 18.7 6.2 C18.5 8.8 18 11 17 12.8 C16.2 13.9 15.3 13.6 14.6 12.5Z" fill="#4597cf"/><path d="M6.2 3.8 C6.6 1.4 8.6 0.8 10.6 0.8 C13 0.8 14.8 2 15.2 4.4 C15.5 6.6 15.2 9.4 14.8 12 C14.6 14 14.6 16.5 14.4 18.3 C14.2 19.6 13.2 20 12 20 C10.6 20 9.8 19.4 9.7 18 L9.5 14.8 C9.3 13.2 8.2 13.2 7.4 12.4 C6.6 11.4 6.4 9 6.3 7Z" fill="#4597cf" stroke="#2f5d80" stroke-width="0.7"/><path d="M7.8 6.5 C8.6 7.5 8.8 9 8.6 10.5 M12.8 5.8 C12.2 6.8 12 8.5 12.6 10 M5.5 13.2 C6.5 12.6 7.3 12.8 8 13.5 M16 11.8 C16.8 12.2 17.8 12 18.4 11.4" fill="none" stroke="#2f5d80" stroke-width="0.7"/></g>
<path d="M136.0 878.7 L141.8 884.9 L147.60000000000002 878.7" fill="none" stroke="#a4a6a8" stroke-width="1.7"/>
<path d="M164.4 878.2 Q161.9 879 161.9 883 Q161.9 887 164.4 887.8Z" fill="#9aa0a6"/>
<path d="M170 876 H176 V891.8 H170 Q166.4 891.8 166.4 888 V879.8 Q166.4 876 170 876Z" fill="#9aa0a6"/>
<rect x="177.5" y="878" width="6.3" height="3.4" fill="#9aa0a6"/><rect x="177.5" y="886.4" width="6.3" height="3.4" fill="#9aa0a6"/>
<circle cx="181.3" cy="892.4" r="3.6" fill="#3c3f41"/><circle cx="181.3" cy="892.4" r="2.8" fill="#48ee0c"/>
</svg>
</body></html>
